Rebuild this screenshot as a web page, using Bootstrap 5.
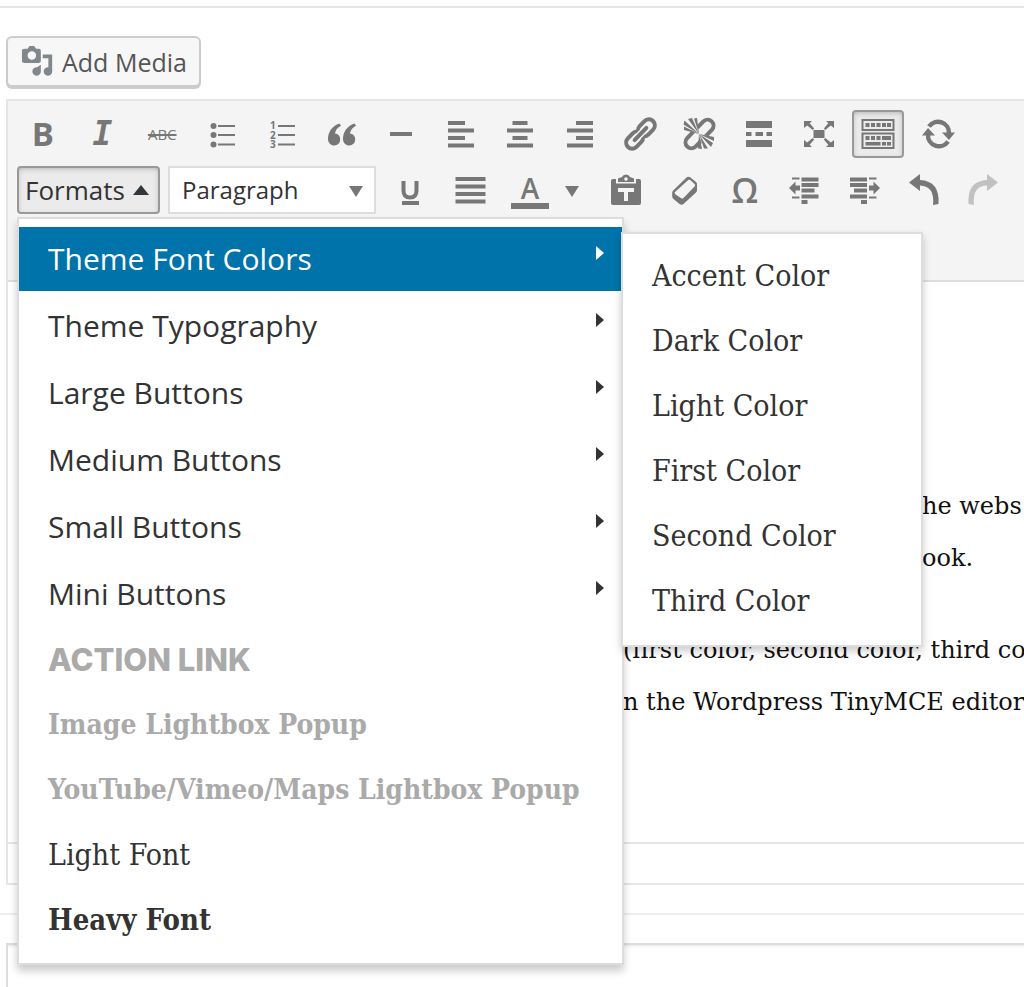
<!DOCTYPE html>
<html lang="en">
<head>
<meta charset="utf-8">
<meta name="viewport" content="width=device-width, initial-scale=1">
<title>Edit Page</title>
<link href="https://cdn.jsdelivr.net/npm/bootstrap@5.3.0/dist/css/bootstrap.min.css" rel="stylesheet">
<style>
  :root { --line: #e5e5e5; --ink: #333; --icon: #777; --slab: "DejaVu Serif Condensed", "DejaVu Serif", serif; }
  body { font-family: "Open Sans", sans-serif; color: var(--ink); overflow-x: hidden; background: #fff; }
  .page-rule { margin-top: 6px; border-top: 2px solid var(--line); }
  .media-row { padding: 28px 0 0 6px; }
  .btn-media { --bs-btn-bg: #f7f7f7; --bs-btn-border-color: #ccc; --bs-btn-color: #555; --bs-btn-hover-bg: #fafafa;
    border-width: 2px; border-radius: 6px; height: 51px; padding: 0 12px 0 13px; font-size: 25px; line-height: 32px; box-shadow: 0 2px 0 #ccc; }
  .btn-media svg { margin-right: 7px; }
  .editor { margin: 12px 0 0 6px; border: 2px solid var(--line); border-right: 0; }
  .toolbar { background: #f4f4f4; border-bottom: 2px solid #ddd; padding: 9px 5px 66px; }
  .tools-main { display: grid; grid-template-columns: repeat(16, minmax(0, 1fr)); max-width: 955px; justify-items: center; }
  .tools-more { display: grid; grid-template-columns: repeat(7, minmax(0, 1fr)); width: 417px; justify-items: center; }
  .tool { display: flex; align-items: center; justify-content: center; width: 52px; height: 48px; padding: 0;
    border: 2px solid transparent; border-radius: 4px; background: none; color: var(--icon); }
  .tool svg { width: 40px; height: 40px; flex: none; fill: currentColor; }
  .tool.pressed { background: #ebebeb; border-color: #999; box-shadow: inset 0 2px 6px -2px rgba(0,0,0,.3); }
  .tool-caret { width: 32px; }
  .g-bold { font-weight: 700; font-size: 33px; line-height: 40px; }
  .g-italic { font: italic 700 33px/40px "DejaVu Sans Mono", monospace; }
  .g-strike { font-size: 15px; line-height: 20px; text-decoration: line-through 2px; }
  .g-omega { font-size: 34px; font-weight: 600; line-height: 44px; }
  .halo { stroke: #f4f4f4; }
  .btn-formats { width: 143px; height: 48px; padding: 0 6px; font-size: 26px; line-height: 32px; color: var(--ink); white-space: nowrap;
    background: #ebebeb; border: 2px solid #999; border-radius: 4px; box-shadow: inset 0 2px 6px -2px rgba(0,0,0,.3); }
  .block-select { width: 208px; height: 48px; padding: 0 12px; font-size: 24px; border: 2px solid #ddd; border-radius: 0; background: #fff; color: var(--ink); appearance: none; }
  .select-arrow { right: 12px; top: 19px; pointer-events: none; }
  .panel { background: #fff; border: 2px solid #ddd; border-radius: 0; color: var(--ink); }
  .formats-menu { width: 607px; top: 51px; left: 0; z-index: 20; padding: 8px 0 9px; box-shadow: 0 6px 8px rgba(0,0,0,.2); }
  .colors-menu { width: 302px; top: 13px; left: 602px; z-index: 21; padding: 11px 0 10px; box-shadow: 0 4px 8px rgba(0,0,0,.2); }
  .entry { display: flex; align-items: center; justify-content: space-between; width: 100%; height: 62px; margin-bottom: 3px;
    padding: 0 18px 0 29px; border: 0; background: none; color: var(--ink); text-align: left; white-space: nowrap; font-size: 30px; line-height: 40px; }
  .entry svg { margin-bottom: 12px; fill: currentColor; }
  .entry-parent { height: 64px; }
  .entry-active { background: #0073aa; color: #fff; }
  .slab { font-family: var(--slab); }
  .slab.muted-entry { font-size: 28px; }
  .slab.entry-heavy { font-size: 29px; }
  .muted-entry { color: #aaa; font-weight: 700; }
  .entry-action { font-family: Inter, sans-serif; font-weight: 800; font-size: 31px; }
  .entry-heavy { font-weight: 700; }
  .content-area { height: 560px; padding-top: 198px; font-family: "DejaVu Serif", serif; font-size: 24px; line-height: 52px; color: #111; white-space: nowrap; overflow: hidden; }
  .content-area p { margin-bottom: 40px; }
  .para-first { padding-left: 914px; }
  .para-second { padding-left: 615px; }
  .status { height: 41px; border-top: 2px solid var(--line); }
  .next-rule { border-top: 2px solid #eee; margin-top: 28px; }
  .next-box { height: 45px; margin: 28px 0 0 6px; border: 2px solid #ddd; border-width: 2px 0 0 2px; box-shadow: inset 0 3px 3px -2px rgba(0,0,0,.1); }
</style>
</head>
<body>
<main class="overflow-hidden">
  <div class="page-rule"></div>
  <div class="media-row">
    <button type="button" class="btn btn-media d-inline-flex align-items-center">
      <svg width="34" height="34" viewBox="0 0 36 36" fill="#82878c" aria-hidden="true"><path fill-rule="evenodd" d="M4 4h3l2-3h5l2 3h3q2 0 2 2v11q0 2-2 2H4q-3 0-3-2V6q0-2 3-2Zm7.500 2.500a4.500 4.500 0 1 0 0 9a4.500 4.500 0 1 0 0-9Z"/><path d="M23 10h10v18a4.500 4.500 0 1 1-4-4.500V14h-6Z"/><path d="M21 21v7a4.500 4.500 0 1 1-4-4.500Z"/></svg>
      Add Media
    </button>
  </div>
  <section class="editor" aria-label="Editor">
    <div class="toolbar">
      <div class="tools-main mb-2">
        <button class="tool g-bold" type="button" aria-label="Bold">B</button>
        <button class="tool g-italic" type="button" aria-label="Italic">I</button>
        <button class="tool g-strike" type="button" aria-label="Strikethrough">ABC</button>
        <button class="tool" type="button" aria-label="Bulleted list"><svg viewBox="0 0 40 40"><circle cx="11.500" cy="12" r="3"/><circle cx="11.500" cy="21" r="3"/><circle cx="11.500" cy="30.500" r="3"/><path d="M16 12h17M16 21h17M16 30.500h17" stroke="currentColor" stroke-width="2"/></svg></button>
        <button class="tool" type="button" aria-label="Numbered list"><svg viewBox="0 0 40 40"><text font-size="10" font-weight="700"><tspan x="8" y="15">1</tspan><tspan x="8" y="24.500">2</tspan><tspan x="8" y="34">3</tspan></text><path d="M16 12h17M16 21h17M16 30.500h17" stroke="currentColor" stroke-width="2"/></svg></button>
        <button class="tool" type="button" aria-label="Blockquote"><svg viewBox="0 0 40 40"><path id="q" d="M18.500 9.500C11 12 7 18 7 25c0 4 3 6.500 6.200 6.500a6 6 0 0 0 6-6.200c0-3.300-2.400-5.600-5.200-5.800c.4-3.500 2.500-5.700 6-7.800Z"/><use href="#q" x="15"/></svg></button>
        <button class="tool" type="button" aria-label="Horizontal line"><svg viewBox="0 0 40 40"><path d="M9 18h22v4H9z"/></svg></button>
        <button class="tool" type="button" aria-label="Align left"><svg viewBox="0 0 40 40"><path d="M7 7h17v4H7zM7 14.500h26v4H7zM7 22h17v4H7zM7 29.500h26v4H7z"/></svg></button>
        <button class="tool" type="button" aria-label="Align center"><svg viewBox="0 0 40 40"><path d="M12.500 7h15v4h-15zM7 14.500h26v4H7zM12.500 22h15v4h-15zM7 29.500h26v4H7z"/></svg></button>
        <button class="tool" type="button" aria-label="Align right"><svg viewBox="0 0 40 40"><path d="M16 7h17v4H16zM7 14.500h26v4H7zM16 22h17v4H16zM7 29.500h26v4H7z"/></svg></button>
        <button class="tool" type="button" aria-label="Insert link"><svg viewBox="0 0 40 40"><g transform="rotate(-46 20.500 20)" fill="none" stroke="currentColor" stroke-width="4"><rect x="2.500" y="14" width="19" height="12" rx="6"/><rect x="19.500" y="14" width="19" height="12" rx="6"/><path class="halo" d="M12 20h17" stroke-width="7"/><path d="M12 20h17" stroke-linecap="round"/></g></svg></button>
        <button class="tool" type="button" aria-label="Remove link"><svg viewBox="0 0 40 40"><g transform="rotate(-46 20.500 20)" fill="none" stroke="currentColor" stroke-width="4"><path d="M18 14H9a6 6 0 0 0 0 12h9M23 14h9a6 6 0 0 1 0 12h-9"/></g><path class="halo" d="M20 20 5 8 16 3ZM20 20 36 25 26 37Z" fill="#f4f4f4"/><path d="M20 20 5.500 6.500l-1 4ZM20 20 9 5l4-1ZM20 20 15 4.500l3-.500ZM20 20 5 12.500V16ZM20 20l15 3v4ZM20 20l14 9-2 4ZM20 20l9 14.500h-4ZM20 20l3 15-4-.500Z"/></svg></button>
        <button class="tool" type="button" aria-label="Read more tag"><svg viewBox="0 0 40 40"><path d="M7 7h26v7H7zM7 18h5.500v4H7zM16.500 18h7.500v4h-7.500zM27.500 18H33v4h-5.500zM7 26h26v7H7z"/></svg></button>
        <button class="tool" type="button" aria-label="Fullscreen"><svg viewBox="0 0 40 40"><path d="M14.500 16h11v8h-11z"/><path id="fa" d="M5 7h8l-2.300 2.300 4.500 5.200-1.500 1.500-5.500-4.500L5 14Z"/><use href="#fa" transform="matrix(-1 0 0 1 40 0)"/><use href="#fa" transform="matrix(1 0 0 -1 0 40)"/><use href="#fa" transform="rotate(180 20 20)"/></svg></button>
        <button class="tool pressed" type="button" aria-label="Toolbar toggle" aria-pressed="true"><svg viewBox="0 0 40 40"><path d="M4.500 6h31v10h-31zM4.500 19.500h31v14.500h-31z" fill="none" stroke="currentColor" stroke-width="2"/><path d="M7.500 9h4v4h-4zM13 9h4v4h-4zM18.500 9h4v4h-4zM24 9h4v4h-4zM29 9h4v4h-4zM7.500 22h4v4h-4zM13 22h4v4h-4zM18.500 22h4v4h-4zM24 22h9v4h-9zM7.500 28h15v3.500h-15zM24 28h4v3.500h-4zM29 28h4v3.500h-4z"/></svg></button>
        <button class="tool" type="button" aria-label="Refresh"><svg viewBox="0 0 40 40"><g id="rf"><path d="M11 12.500a11 11 0 0 1 20 7" fill="none" stroke="currentColor" stroke-width="4.500"/><path d="M24 18.500h13L31 26Z"/></g><use href="#rf" transform="rotate(180 20.500 20)"/></svg></button>
      </div>
      <div class="d-flex gap-2 ps-1">
        <div class="dropdown flex-shrink-0">
          <button type="button" class="btn-formats d-flex align-items-center" aria-expanded="true" aria-haspopup="true">Formats
            <svg class="ms-2" width="16" height="12" viewBox="0 0 16 12" fill="#32373c" aria-hidden="true"><path d="M8 1l8 10H0z"/></svg></button>
          <div class="panel formats-menu position-absolute">
            <button type="button" class="entry entry-parent entry-active">Theme Font Colors <svg width="8" height="14" viewBox="0 0 8 14"><path d="M0 0l8 7-8 7z"/></svg></button>
            <button type="button" class="entry entry-parent">Theme Typography <svg width="8" height="14" viewBox="0 0 8 14"><path d="M0 0l8 7-8 7z"/></svg></button>
            <button type="button" class="entry entry-parent">Large Buttons <svg width="8" height="14" viewBox="0 0 8 14"><path d="M0 0l8 7-8 7z"/></svg></button>
            <button type="button" class="entry entry-parent">Medium Buttons <svg width="8" height="14" viewBox="0 0 8 14"><path d="M0 0l8 7-8 7z"/></svg></button>
            <button type="button" class="entry entry-parent">Small Buttons <svg width="8" height="14" viewBox="0 0 8 14"><path d="M0 0l8 7-8 7z"/></svg></button>
            <button type="button" class="entry entry-parent">Mini Buttons <svg width="8" height="14" viewBox="0 0 8 14"><path d="M0 0l8 7-8 7z"/></svg></button>
            <button type="button" class="entry muted-entry entry-action">ACTION LINK</button>
            <button type="button" class="entry slab muted-entry">Image Lightbox Popup</button>
            <button type="button" class="entry slab muted-entry">YouTube/Vimeo/Maps Lightbox Popup</button>
            <button type="button" class="entry slab">Light Font</button>
            <button type="button" class="entry slab entry-heavy">Heavy Font</button>
            <div class="panel colors-menu position-absolute">
              <button type="button" class="entry slab">Accent Color</button>
              <button type="button" class="entry slab">Dark Color</button>
              <button type="button" class="entry slab">Light Color</button>
              <button type="button" class="entry slab">First Color</button>
              <button type="button" class="entry slab">Second Color</button>
              <button type="button" class="entry slab">Third Color</button>
            </div>
          </div>
        </div>
        <div class="position-relative flex-shrink-0">
          <select class="block-select" aria-label="Block format"><option>Paragraph</option></select>
          <svg class="select-arrow position-absolute" width="16" height="12" viewBox="0 0 16 12" fill="#777" aria-hidden="true"><path d="M1 1h14L8 12z"/></svg>
        </div>
        <button class="tool flex-shrink-0" type="button" aria-label="Underline"><svg viewBox="0 0 40 40"><path d="M13.500 11v9.500q0 7 6.500 7t6.500-7V11" fill="none" stroke="currentColor" stroke-width="4"/><path d="M12 31h17v4H12z"/></svg></button>
        <button class="tool flex-shrink-0" type="button" aria-label="Justify"><svg viewBox="0 0 40 40"><path d="M5.500 7h30v4h-30zM5.500 14.500h30v4h-30zM5.500 22h30v4h-30zM5.500 29.500h30v4h-30z"/></svg></button>
        <div class="d-flex flex-shrink-0">
          <button class="tool" type="button" aria-label="Text color"><svg viewBox="0 0 40 40"><text x="20" y="29" text-anchor="middle" font-size="28" font-weight="600">A</text><path d="M1 33h38v6H1z"/></svg></button>
          <button class="tool tool-caret" type="button" aria-label="Choose text color"><svg viewBox="0 0 40 40"><path d="M13 16h14l-7 11z"/></svg></button>
        </div>
        <div class="tools-more flex-shrink-0">
          <button class="tool" type="button" aria-label="Paste as text"><svg viewBox="0 0 40 40"><path fill-rule="evenodd" d="M7 9h3v4.500h20V9h3q2 0 2 2v22q0 2-2 2H7q-2 0-2-2V11q0-2 2-2Zm5 9v4h6v9h4v-9h6v-4Z"/><path fill-rule="evenodd" d="M12 12V8.500l4-1.500q1-2.500 4-2.500T24 7l4 1.500V12Zm8-4.700a1.800 1.800 0 1 0 0 3.600a1.800 1.800 0 1 0 0-3.600Z"/></svg></button>
          <button class="tool" type="button" aria-label="Clear formatting"><svg viewBox="0 0 40 40"><path fill-rule="evenodd" d="M21 8q2-2 4.500-.500L31 12q1.500 1 1 3.500V20q0 1.500-1 2.500L18.500 34q-2 1.500-4 0L8.500 29q-1.500-1-1.300-3V22.500q0-1 1-2Zm2.500 1.800L9.500 22.500l.500 1.500 6.500 4.500h1.500L30 16v-1.500l-5-4.700Z"/></svg></button>
          <button class="tool g-omega" type="button" aria-label="Special character">Ω</button>
          <button class="tool" type="button" aria-label="Decrease indent"><svg viewBox="0 0 40 40"><path d="M17.500 7.500h17v4h-17zM17.500 13h17v4h-17zM17.500 18.500h13v4h-13zM17.500 24.500h17v4h-17zM17.500 30h6v4h-6zM8 7.500h7.500v2H8zM8 26.500h7.500v2H8zM5 18l6.500-6.500v4h4.500v5h-4.500v4z"/></svg></button>
          <button class="tool" type="button" aria-label="Increase indent"><svg viewBox="0 0 40 40"><path d="M6 7.500h17v4H6zM6 13h17v4H6zM10 18.500h13v4H10zM6 24.500h17v4H6zM17 30h6v4h-6zM25 7.500h7.500v2H25zM25 26.500h7.500v2H25zM36 18l-6.500-6.500v4H25v5h4.500v4z"/></svg></button>
          <button class="tool" type="button" aria-label="Undo"><svg viewBox="0 0 40 40"><path d="M5 12.500 16 4v6Q36 11 34.500 34l-5.500 1Q31 16 16 15.500V21Z"/></svg></button>
          <button class="tool" type="button" aria-label="Redo" disabled><svg viewBox="0 0 40 40" opacity=".4"><path d="M35 12.500 24 4v6Q4 11 5.500 34l5.500 1Q9 16 24 15.500V21Z"/></svg></button>
        </div>
      </div>
    </div>
    <div class="content-area">
      <p class="para-first">he webs<br>ook.</p>
      <p class="para-second">(first color, second color, third col<br>n the Wordpress TinyMCE editor</p>
    </div>
    <div class="status"></div>
  </section>
  <div class="next-rule"></div>
  <div class="next-box"></div>
</main>
<script src="https://cdn.jsdelivr.net/npm/bootstrap@5.3.0/dist/js/bootstrap.bundle.min.js"></script>
</body>
</html>
